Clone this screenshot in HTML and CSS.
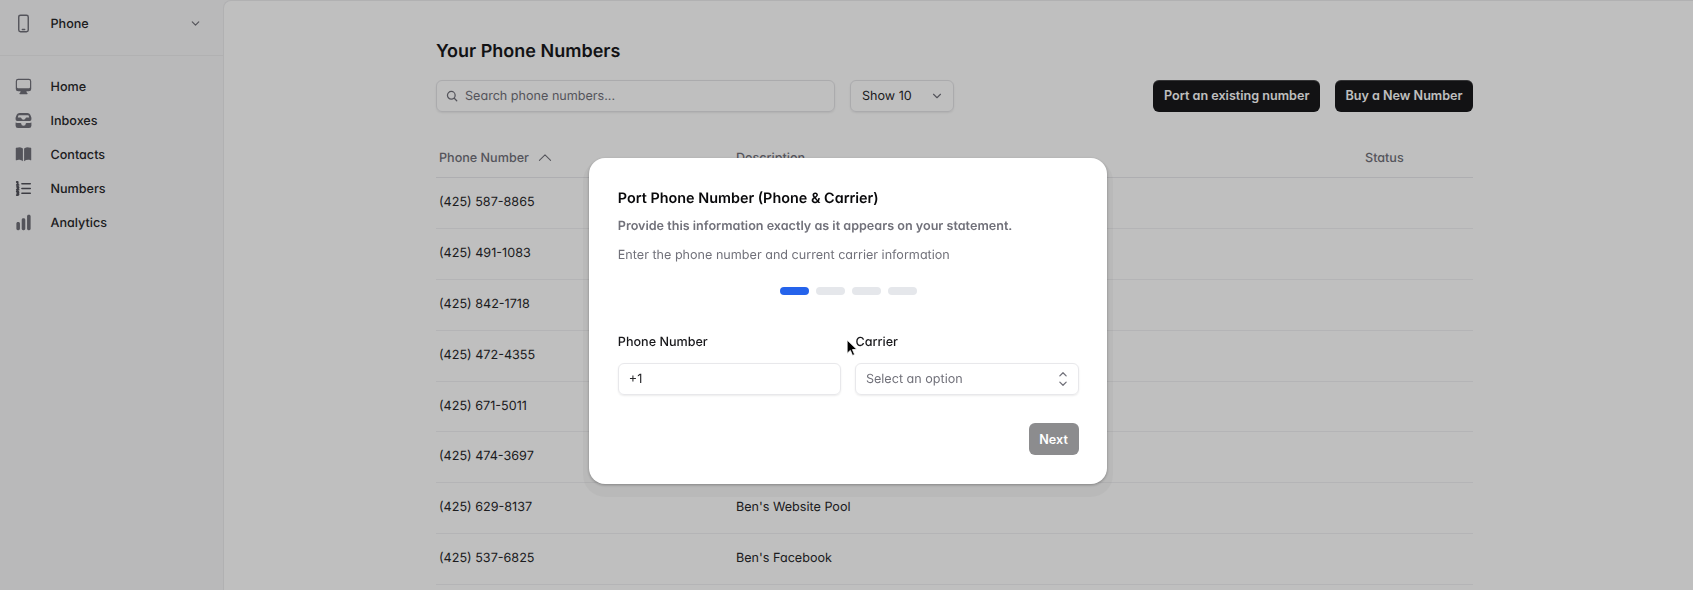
FILE: index.html
```html
<!DOCTYPE html>
<html lang="en">
<head>
<meta charset="utf-8">
<title>Your Phone Numbers</title>
<link rel="stylesheet" href="styles.css">
</head>
<body>
<div class="app">
  <aside class="sidebar">
    <div class="switcher">
      <svg class="nav-icon" viewBox="0 0 24 24" fill="none" stroke="currentColor" stroke-width="1.8" stroke-linecap="round" stroke-linejoin="round"><path d="M8.25 1.5A2.25 2.25 0 0 0 6 3.75v16.5a2.25 2.25 0 0 0 2.25 2.25h7.5A2.25 2.25 0 0 0 18 20.25V3.75a2.25 2.25 0 0 0-2.25-2.25h-7.5ZM10.5 19.5h3"/></svg>
      <span class="nav-label">Phone</span>
      <svg class="switcher-chevron" viewBox="0 0 20 20" fill="none" stroke="currentColor" stroke-width="1.8" stroke-linecap="round" stroke-linejoin="round"><path d="m5 7.5 5 5 5-5"/></svg>
    </div>
    <nav class="nav">
      <a class="nav-item"><svg class="nav-icon" viewBox="0 0 24 24" fill="currentColor"><path fill-rule="evenodd" d="M2.25 5.25a3 3 0 0 1 3-3h13.5a3 3 0 0 1 3 3V15a3 3 0 0 1-3 3h-3v.257c0 .597.237 1.17.659 1.591l.621.622a.75.75 0 0 1-.53 1.28h-9a.75.75 0 0 1-.53-1.28l.621-.622a2.25 2.25 0 0 0 .659-1.59V18h-3a3 3 0 0 1-3-3V5.25Zm1.5 0v7.5a1.5 1.5 0 0 0 1.5 1.5h13.5a1.5 1.5 0 0 0 1.5-1.5v-7.5a1.5 1.5 0 0 0-1.5-1.5H5.25a1.5 1.5 0 0 0-1.5 1.5Z"/></svg><span class="nav-label">Home</span></a>
      <a class="nav-item"><svg class="nav-icon" viewBox="0 0 24 24" fill="currentColor"><path fill-rule="evenodd" d="M7 2.5h10a4 4 0 0 1 3.6 2.3L21.8 8c.1.3.2.6.2.9v1.6a2 2 0 0 1-2 2H4a2 2 0 0 1-2-2V8.9c0-.3.1-.6.2-.9l1.2-3.2A4 4 0 0 1 7 2.5Zm-.6 2.8c-.4 0-.7.2-.9.6L4.8 8.2h3.5c.4 0 .8.3.9.7a2.9 2.9 0 0 0 5.6 0c.1-.4.5-.7.9-.7h3.5l-.7-2.3c-.2-.4-.5-.6-.9-.6H6.4Z"/><path d="M2 14.6c.6.3 1.3.4 2 .4h4.2c.4 0 .8.3.9.7a2.9 2.9 0 0 0 5.8 0c.1-.4.5-.7.9-.7H20c.7 0 1.4-.1 2-.4v3.9a3 3 0 0 1-3 3H5a3 3 0 0 1-3-3v-3.9Z"/></svg><span class="nav-label">Inboxes</span></a>
      <a class="nav-item"><svg class="nav-icon" viewBox="0 0 24 24" fill="currentColor"><path d="M11.25 4.533A9.707 9.707 0 0 0 6 3a9.735 9.735 0 0 0-3.25.555.75.75 0 0 0-.5.707v14.25a.75.75 0 0 0 1 .707A8.237 8.237 0 0 1 6 18.75c1.995 0 3.823.707 5.25 1.886V4.533ZM12.75 20.636A8.214 8.214 0 0 1 18 18.75c.966 0 1.89.166 2.75.47a.75.75 0 0 0 1-.708V4.262a.75.75 0 0 0-.5-.707A9.735 9.735 0 0 0 18 3a9.707 9.707 0 0 0-5.25 1.533v16.103Z"/></svg><span class="nav-label">Contacts</span></a>
      <a class="nav-item"><svg class="nav-icon list-icon" viewBox="0 0 24 24" fill="none" stroke="currentColor" stroke-linecap="round" stroke-linejoin="round"><path stroke-width="2" d="M10 5.992h10.5M10 11.995h10.5M10 17.994h10.5"/><path stroke-width="2.3" d="M4.6 7.495v-3.75H3.5m1.1 3.75H3.5m1.1 0h1.1m-1.9 2.577a1.125 1.125 0 1 1 1.6 1.59l-1.8 1.83h2.2M3.5 15.745h1.1a1.125 1.125 0 0 1 0 2.25h-.4m0 0h.4a1.125 1.125 0 0 1 0 2.25H3.5"/></svg><span class="nav-label">Numbers</span></a>
      <a class="nav-item"><svg class="nav-icon" viewBox="0 0 24 24" fill="currentColor"><path d="M18.375 2.25c-1.035 0-1.875.84-1.875 1.875v15.75c0 1.035.84 1.875 1.875 1.875h.75c1.035 0 1.875-.84 1.875-1.875V4.125c0-1.036-.84-1.875-1.875-1.875h-.75ZM9.75 8.625c0-1.036.84-1.875 1.875-1.875h.75c1.036 0 1.875.84 1.875 1.875v11.25c0 1.035-.84 1.875-1.875 1.875h-.75a1.875 1.875 0 0 1-1.875-1.875V8.625ZM3 13.125c0-1.036.84-1.875 1.875-1.875h.75c1.036 0 1.875.84 1.875 1.875v6.75c0 1.035-.84 1.875-1.875 1.875h-.75A1.875 1.875 0 0 1 3 19.875v-6.75Z"/></svg><span class="nav-label">Analytics</span></a>
    </nav>
  </aside>
  <main class="main">
    <div class="content">
      <h1 class="title">Your Phone Numbers</h1>
      <div class="toolbar">
        <div class="search">
          <svg class="search-icon" viewBox="0 0 20 20" fill="none" stroke="currentColor" stroke-width="1.8" stroke-linecap="round"><circle cx="9" cy="9" r="5.5"/><path d="m13.2 13.2 3.6 3.6"/></svg>
          <span>Search phone numbers...</span>
        </div>
        <div class="show">
          <span>Show 10</span>
          <svg class="show-chevron" viewBox="0 0 20 20" fill="none" stroke="currentColor" stroke-width="1.6" stroke-linecap="round" stroke-linejoin="round"><path d="m5 7.5 5 5 5-5"/></svg>
        </div>
        <div class="actions">
          <button class="btn">Port an existing number</button>
          <button class="btn">Buy a New Number</button>
        </div>
      </div>
      <div class="table">
        <div class="row head">
          <div class="cell-num">Phone Number <svg class="sort" viewBox="0 0 20 20" fill="none" stroke="currentColor" stroke-width="1.3" stroke-linecap="round" stroke-linejoin="round"><path d="m3 13 7-7 7 7"/></svg></div>
          <div class="cell-desc">Description</div>
          <div class="cell-status">Status</div>
        </div>
        <div class="row"><div class="cell-num">(425) 587-8865</div><div class="cell-desc"></div><div class="cell-status"></div></div>
        <div class="row"><div class="cell-num">(425) 491-1083</div><div class="cell-desc"></div><div class="cell-status"></div></div>
        <div class="row"><div class="cell-num">(425) 842-1718</div><div class="cell-desc"></div><div class="cell-status"></div></div>
        <div class="row"><div class="cell-num">(425) 472-4355</div><div class="cell-desc"></div><div class="cell-status"></div></div>
        <div class="row"><div class="cell-num">(425) 671-5011</div><div class="cell-desc"></div><div class="cell-status"></div></div>
        <div class="row"><div class="cell-num">(425) 474-3697</div><div class="cell-desc"></div><div class="cell-status"></div></div>
        <div class="row"><div class="cell-num">(425) 629-8137</div><div class="cell-desc">Ben's Website Pool</div><div class="cell-status"></div></div>
        <div class="row"><div class="cell-num">(425) 537-6825</div><div class="cell-desc">Ben's Facebook</div><div class="cell-status"></div></div>
      </div>
    </div>
  </main>
</div>
<div class="overlay"></div>
<section class="modal">
  <h2 class="modal-title">Port Phone Number (Phone &amp; Carrier)</h2>
  <p class="modal-strong">Provide this information exactly as it appears on your statement.</p>
  <p class="modal-sub">Enter the phone number and current carrier information</p>
  <div class="steps"><span class="step active"></span><span class="step"></span><span class="step"></span><span class="step"></span></div>
  <div class="fields">
    <div class="field">
      <label class="label">Phone Number</label>
      <div class="input">+1</div>
    </div>
    <div class="field">
      <label class="label">Carrier</label>
      <div class="input select"><span>Select an option</span>
        <svg class="updown" viewBox="0 0 20 20" fill="none" stroke="currentColor" stroke-width="1.4" stroke-linecap="round" stroke-linejoin="round"><path d="m6.5 6.5 3.5-3.5 3.5 3.5M6.5 13.5l3.5 3.5 3.5-3.5"/></svg>
      </div>
    </div>
  </div>
  <div class="modal-foot"><button class="next">Next</button></div>
</section>
<svg class="cursor" viewBox="0 0 14 20"><path d="M1 1v15l3.6-3.3 2.4 5.6 2.4-1-2.4-5.5H12Z" fill="#000" stroke="#fff" stroke-width="1"/></svg>
</body>
</html>
```
FILE: styles.css
```css
* { box-sizing: border-box; }
html, body { margin: 0; height: 100%; }
body {
  font-family: "Inter", "Liberation Sans", sans-serif;
  font-feature-settings: "cv11";
  text-rendering: geometricPrecision;
  font-size: 12.6px;
  color: #18181b;
  background: #f7f7f8;
  overflow: hidden;
}
.app { display: flex; height: 590px; overflow: hidden; }
.sidebar { width: 223px; flex: none; }
.switcher {
  height: 56px;
  display: flex;
  align-items: center;
  padding: 0 16px 8px 14px;
  border-bottom: 1px solid #ececee;
}
.nav-icon { width: 19px; height: 19px; flex: none; color: #71717a; }
.list-icon { color: #52525b; }
.nav-label { margin-left: 17.5px; padding-top: 2px; font-size: 12.6px; font-weight: 500; color: #27272a; }
.switcher-chevron { width: 13px; height: 13px; margin-left: auto; margin-right: 5px; color: #71717a; }
.nav { padding-top: 13px; }
.nav-item { height: 34px; display: flex; align-items: center; padding-left: 14px; }
.main {
  flex: 1;
  background: #fff;
  border-left: 1px solid #ececee;
  border-top: 1px solid #ececee;
  border-top-left-radius: 8px;
  padding-left: 212px;
  padding-right: 220px;
}
.title { margin: 0; padding-top: 40px; font-size: 18px; line-height: 22px; font-weight: 600; color: #18181b; }
.toolbar { display: flex; align-items: center; margin-top: 17px; height: 32px; }
.search {
  width: 399px;
  height: 32px;
  display: flex;
  align-items: center;
  gap: 6px;
  padding-left: 8px;
  border: 1px solid #e4e4e7;
  border-radius: 6px;
  box-shadow: 0 1px 2px rgba(0,0,0,.08);
  color: #71717a;
}
.search-icon { width: 14px; height: 14px; color: #71717a; }
.show {
  width: 104px;
  height: 32px;
  margin-left: 15px;
  display: flex;
  align-items: center;
  justify-content: space-between;
  padding: 0 9px 0 11px;
  border: 1px solid #e4e4e7;
  border-radius: 6px;
  box-shadow: 0 1px 2px rgba(0,0,0,.08);
  color: #27272a;
}
.show-chevron { width: 14px; height: 14px; color: #71717a; }
.actions { margin-left: auto; display: flex; gap: 15px; }
.btn {
  height: 32px;
  padding: 0 10.5px 1px;
  border: 0;
  border-radius: 6px;
  background: #18181b;
  box-shadow: inset 0 1px 0 rgba(255,255,255,.2);
  color: #fff;
  font: inherit;
  font-weight: 600;
}
.table { margin-top: 29px; }
.row {
  display: flex;
  align-items: center;
  height: 50.9px;
  padding-bottom: 1px;
  border-bottom: 1px solid #f1f1f3;
  color: #27272a;
}
.row.head { height: 37px; padding-bottom: 2px; color: #71717a; border-bottom-color: #e9e9ec; font-weight: 500; }
.cell-num { width: 297px; padding-left: 3px; display: flex; align-items: center; gap: 8px; }
.cell-desc { width: 632px; padding-left: 3px; }
.cell-status { flex: 1; }
.sort { width: 16px; height: 16px; }
.overlay { position: fixed; inset: 0; background: rgba(0,0,0,.25); }
.modal {
  position: fixed;
  left: 589px;
  top: 158px;
  width: 518.4px;
  height: 326px;
  padding: 32px 28.8px 0;
  background: #fff;
  border-radius: 16px;
  box-shadow: 0 7px 1px 6px rgba(0,0,0,.035), 0 1px 3px rgba(0,0,0,.3);
}
.modal-title { margin: 0; font-size: 14.4px; line-height: 18px; font-weight: 600; color: #09090b; }
.modal-strong { margin: 11px 0 0; font-size: 12.6px; line-height: 16px; font-weight: 600; color: #71717a; }
.modal-sub { margin: 13px 0 0; font-size: 12.6px; line-height: 16px; color: #71717a; }
.steps { display: flex; justify-content: center; gap: 7px; margin-top: 23px; }
.step { width: 29px; height: 8px; border-radius: 4px; background: #e5e7eb; }
.step.active { background: #2563eb; }
.fields { display: flex; gap: 14.4px; margin-top: 39px; }
.field { flex: 1; }
.label { display: block; font-size: 12.6px; line-height: 18px; font-weight: 500; color: #18181b; }
.input {
  margin-top: 11px;
  height: 32px;
  display: flex;
  align-items: center;
  padding: 0 10px;
  border: 1px solid #e8e8eb;
  border-radius: 6px;
  box-shadow: 0 1px 2px rgba(0,0,0,.08);
  color: #27272a;
}
.select { justify-content: space-between; color: #71717a; padding-right: 6px; padding-left: 9.5px; }
.updown { width: 18px; height: 18px; color: #71717a; }
.modal-foot { display: flex; justify-content: flex-end; margin-top: 28px; }
.next {
  width: 50px;
  height: 32px;
  border: 0;
  border-radius: 6px;
  background: #8c8c8e;
  color: #fff;
  font: inherit;
  font-weight: 600;
}
.cursor { position: fixed; left: 846px; top: 339px; width: 13px; height: 18px; }
```
